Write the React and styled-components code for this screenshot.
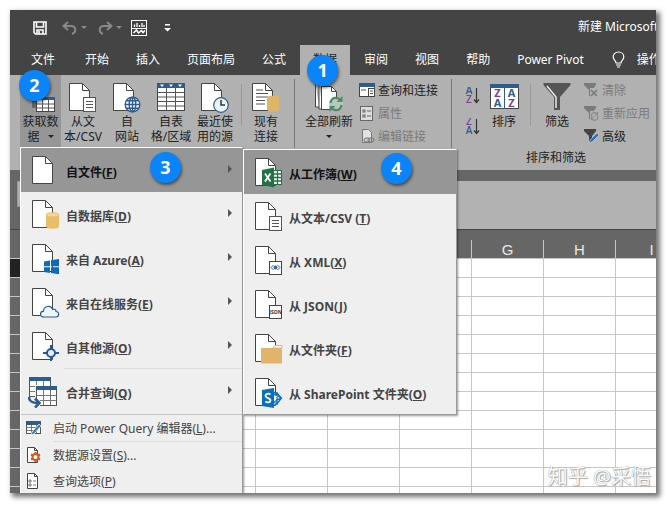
import React from 'react';
import styled, { createGlobalStyle } from 'styled-components';

const GlobalStyle = createGlobalStyle`
	* {
		box-sizing: border-box;
	}
	body {
		margin: 0;
		background: #fff;
		font-family: 'Noto Sans', 'Noto Sans CJK SC', sans-serif;
		font-size: 12px;
		line-height: 15px;
	}
	button {
		margin: 0;
		padding: 0;
		border: 0;
		background: none;
		color: inherit;
		font: inherit;
		cursor: pointer;
	}
	svg {
		display: block;
		flex: none;
	}
`;

const Page = styled.div`
	height: 100vh;
	padding: 10px 12px 12px 10px;
`;

const Window = styled.div`
	height: 100%;
	box-shadow: 3px 3px 5px 1px rgba(0, 0, 0, 0.55);
`;

const Clip = styled.div`
	position: relative;
	display: flex;
	flex-direction: column;
	height: 100%;
	overflow: hidden;
	background: #666;
`;

const TitleBar = styled.header`
	display: flex;
	align-items: center;
	flex: none;
	height: 35px;
	padding-left: 22px;
	background: #444;
	color: #fff;
`;

const QuickButton = styled.button`
	display: flex;
	align-items: center;
	flex: none;
	gap: 3px;
	height: 24px;
	margin-left: ${(props) => props.$gap || 0}px;
	color: ${(props) => (props.$dim ? '#888' : '#fff')};
`;

const Title = styled.h1`
	flex: none;
	margin: 0 0 0 auto;
	width: 78px;
	padding-bottom: 2px;
	font-size: 12px;
	font-weight: 400;
	white-space: nowrap;
`;

const Tabs = styled.nav`
	display: flex;
	flex: none;
	gap: 1px;
	height: 30px;
	padding-left: 5px;
	background: #444;
	color: #fff;
`;

const Tab = styled.button`
	position: relative;
	flex: none;
	padding: 0 ${(props) => (props.$wide ? 16 : 13)}px 2px;
	background: ${(props) => (props.$active ? '#b1b1b1' : 'transparent')};
	color: ${(props) => (props.$active ? '#222' : '#fff')};
	white-space: nowrap;
`;

const TellMe = styled.button`
	display: flex;
	align-items: center;
	flex: none;
	gap: 12px;
	padding: 0 0 2px 14px;
	white-space: nowrap;
`;

const Badge = styled.span`
	position: absolute;
	z-index: 5;
	top: ${(props) => props.$top}px;
	left: ${(props) => props.$left}px;
	width: 31px;
	height: 31px;
	border-radius: 50%;
	background: #0a84f8;
	box-shadow: 1px 2px 3px rgba(0, 0, 0, 0.5);
	color: #fff;
	font: bold 18px/31px 'Open Sans', sans-serif;
	text-align: center;
`;

const Ribbon = styled.section`
	position: relative;
	display: flex;
	flex: none;
	height: 95px;
	padding-left: 10px;
	background: #b1b1b1;
	color: #222;
`;

const Group = styled.div`
	display: flex;
	flex: none;
	height: 73px;
	padding: 0 ${(props) => props.$pad || 0}px;
`;

const Divider = styled.div`
	flex: none;
	width: 1px;
	height: ${(props) => (props.$short ? 42 : 69)}px;
	margin: ${(props) => (props.$short ? '9px 4px 0' : '4px 0 0')};
	background: ${(props) => (props.$short ? '#999' : '#777')};
`;

const BigButton = styled.button`
	position: relative;
	display: flex;
	flex-direction: column;
	align-items: center;
	flex: none;
	width: ${(props) => props.$width || 44}px;
	height: 73px;
	padding-top: 8px;
	background: ${(props) => (props.$open ? '#969696' : 'transparent')};
	white-space: pre;
	svg + span {
		margin-top: 1px;
	}
`;

const CaretRow = styled.span`
	display: flex;
	align-items: center;
	gap: 5px;
	height: 15px;
`;

const SmallList = styled.div`
	display: flex;
	flex-direction: column;
	gap: 1px;
	padding: 4px 0 0 4px;
`;

const SmallButton = styled.button`
	display: flex;
	align-items: center;
	gap: 3px;
	height: 22px;
	white-space: nowrap;
	&:disabled {
		color: #7a7a7a;
	}
`;

const SortColumn = styled.div`
	display: flex;
	flex-direction: column;
	gap: 14px;
	padding: 12px 2px 0 0;
`;

const LabelledGroup = styled.div`
	flex: none;
	width: 182px;
`;

const GroupLabel = styled.div`
	padding-top: 2px;
	text-align: center;
`;

const FormulaBar = styled.div`
	display: flex;
	flex: none;
	height: 60px;
	padding: 11px 0 0 7px;
	border-bottom: 1px solid #444;
`;

const NameBox = styled.input`
	width: 90px;
	height: 26px;
	padding: 0;
	border: 1px solid #999;
	background: #b1b1b1;
`;

const FormulaInput = styled.input`
	flex: 1;
	min-width: 0;
	margin-left: 60px;
	padding: 0;
	border: 0;
	background: #b2b2b2;
`;

const SheetArea = styled.div`
	flex: 1;
	min-height: 0;
	padding-top: 10px;
	overflow: hidden;
`;

const Sheet = styled.table`
	width: 1902px;
	table-layout: fixed;
	border-collapse: separate;
	border-spacing: 0;
	background: #fff;
	th,
	td {
		height: 19px;
		padding: 0;
		border-right: 1px solid #c6c6c6;
		border-bottom: 1px solid #c6c6c6;
	}
	th {
		background: #666;
		color: #e8e8e8;
		font: 400 15px/17px 'Liberation Sans', sans-serif;
	}
	tbody th {
		font-size: 12px;
	}
	tbody tr:first-child th {
		background: #222;
	}
`;

const Watermark = styled.div`
	position: absolute;
	right: 5px;
	bottom: 4px;
	color: #fff;
	font-size: 20px;
	line-height: 24px;
	text-shadow: 0 0 1px #777, 1px 1px 1px #aaa;
`;

const Menu = styled.div`
	position: absolute;
	z-index: 3;
	top: 72px;
	left: 10px;
	width: 223px;
	border: 1px solid #fff;
	border-right-color: #999;
	background: #efefef;
	box-shadow: 1px 1px 2px rgba(0, 0, 0, 0.4);
	color: #444;
`;

const SubMenu = styled(Menu)`
	top: 1px;
	left: 222px;
	width: 214px;
	border-color: #fff #999 #999 #fff;
`;

const MenuEntry = styled.div`
	position: relative;
`;

const MenuItem = styled.button`
	display: flex;
	align-items: center;
	width: 100%;
	height: 44px;
	padding: 2px 9px 0 ${(props) => (props.$outset ? 7 : 11)}px;
	background: ${(props) => (props.$active ? '#969696' : 'transparent')};
	color: ${(props) => (props.$active ? '#111' : '#444')};
	font-weight: 700;
	text-align: left;
	white-space: nowrap;
	&:hover {
		background: ${(props) => (props.$active ? '#969696' : '#ddd')};
	}
`;

const MenuText = styled.span`
	flex: 1;
	padding: 3px 0 0 ${(props) => (props.$outset ? 8 : 6)}px;
`;

const CommandItem = styled.button`
	display: flex;
	align-items: center;
	gap: 12px;
	width: 100%;
	height: 26px;
	padding-left: 5px;
	color: #444;
	white-space: nowrap;
`;

const MenuLine = styled.div`
	height: 1px;
	margin: ${(props) => (props.$indent ? 0 : 1)}px 0 0 ${(props) => props.$indent || 0}px;
	background: ${(props) => (props.$indent ? '#dcdcdc' : '#c4c4c4')};
`;

const Caret = () => (
	<svg width="6" height="3" viewBox="0 0 6 3">
		<path d="M0 0h6L3 3z" fill="currentColor" />
	</svg>
);

const SaveIcon = () => (
	<svg width="16" height="16" viewBox="0 0 16 16" fill="none" stroke="currentColor" strokeWidth="1.6">
		<path d="M2 2h12v12H3.5L2 12.500z" />
		<path d="M4.500 2v5h7V2M5 14v-4h6v4" />
		<path d="M7 11v3" />
	</svg>
);

const UndoIcon = ({ flip }) => (
	<svg width="16" height="14" viewBox="0 0 16 14" fill="none" stroke="currentColor" strokeWidth="2">
		<g transform={flip ? 'translate(16 0) scale(-1 1)' : undefined}>
			<path d="M6 1L1.500 5 6 9M2 5h7c5 0 6 6 1 8" />
		</g>
	</svg>
);

const ChartIcon = () => (
	<svg width="16" height="16" viewBox="0 0 16 16" fill="none" stroke="currentColor">
		<rect x=".5" y=".5" width="15" height="15" />
		<path d="M.5 8.500h15" />
		<path d="M3.500 7V4.500M6 7V3M8.500 7V5M11 7V3M13 7V5" strokeWidth="1.300" />
		<path d="M2.500 13l3-3 2 3 3-2.500 1.500 2 2-2" strokeWidth="1.500" />
	</svg>
);

const MoreIcon = () => (
	<svg width="7" height="8" viewBox="0 0 7 8" fill="currentColor">
		<path d="M1 0h5v1.500H1zM0 4h7L3.500 7.500z" />
	</svg>
);

const BulbIcon = () => (
	<svg width="13" height="17" viewBox="0 0 13 17" fill="none" stroke="#fff" strokeWidth="1.200">
		<path d="M4 12C4 9.500 1.200 9 1.200 5.800 1.200 3 3.500 1 6.500 1s5.300 2 5.300 4.800C11.800 9 9 9.500 9 12zM4 14h5M5 16h3" />
	</svg>
);

// Sheet of paper with a folded corner, with an optional overlay in the lower right.
const DocIcon = ({ children }) => (
	<svg width="28" height="30" viewBox="0 0 28 30">
		<path d="M.5 .5h13l7 7v20H.5z" fill="#fff" stroke="#444" />
		<path d="M13.500 .5v7h7" fill="none" stroke="#444" />
		{children}
	</svg>
);

const NotePart = () => (
	<g stroke="#555" fill="#fff">
		<rect x="14.500" y="14.500" width="12" height="14" />
		<path d="M17 18.500h7M17 21.500h7M17 24.500h7" />
	</g>
);

const GlobePart = () => (
	<g fill="#fff" stroke="#2f5c8f" strokeWidth="1.400">
		<circle cx="19.500" cy="21.500" r="7.300" />
		<ellipse cx="19.500" cy="21.500" rx="3.300" ry="7.300" />
		<path d="M19.500 14v15M12 21.500h15M13.500 17.800h12M13.500 25.200h12" />
	</g>
);

const ClockPart = () => (
	<g fill="#e9f3fc" stroke="#2f5c8f" strokeWidth="1.200">
		<circle cx="20" cy="22" r="7.300" />
		<path d="M20 17v5h4" fill="none" stroke="#333" strokeWidth="1.500" />
	</g>
);

const DatabasePart = () => (
	<g>
		<path d="M14 14.500c0-3 13-3 13 0v12c0 3-13 3-13 0z" fill="#e9be6b" />
		<ellipse cx="20.500" cy="14.800" rx="5.500" ry="1.500" fill="#f5d99c" />
	</g>
);

const WindowsPart = () => (
	<g fill="#0a6cbf">
		<path d="M12 17.500l6-1v5.800h-6zM19 16.300l8-1.300v7.300h-8zM12 23.300h6V29l-6-1zM19 23.300h8v7l-8-1.200z" />
	</g>
);

const CloudPart = () => (
	<path
		d="M12 29c-4.500 0-4.500-5.500-.5-5.800 0-5.500 8-6.500 9.200-1.700 2-.8 3.500.3 3.300 2 3.500.2 3.500 5.500 0 5.500z"
		fill="#eef6fd"
		stroke="#2f5c8f"
		strokeWidth="1.200"
	/>
);

const TargetPart = () => (
	<g fill="none" stroke="#2b579a" strokeWidth="2">
		<path d="M19 13v4M19 25v4M11 21h4M23 21h4" />
		<circle cx="19" cy="21" r="4" fill="#e5effa" />
	</g>
);

const ExcelPart = () => (
	<g>
		<rect x="17.500" y="12.500" width="9" height="14" fill="#fff" stroke="#217346" />
		<path d="M18 16h8M18 19.500h8M18 23h8M22.500 13v13" stroke="#217346" strokeWidth="1.300" />
		<path d="M7 12l12-2.500v20L7 27z" fill="#217346" />
		<path d="M10 15.500l5.500 8M15.500 15.500l-5.500 8" stroke="#fff" strokeWidth="1.800" />
	</g>
);

const XmlPart = () => (
	<g fill="none" stroke="#2b579a">
		<rect x="14.500" y="15.500" width="12" height="13" fill="#fff" stroke="#444" />
		<path d="M18.500 19L16 21.500l2.500 2.500M22.500 19l2.500 2.500-2.500 2.500" />
		<circle cx="20.500" cy="21.500" r="1.500" fill="#2b579a" />
	</g>
);

const JsonPart = () => (
	<g>
		<rect x="14.500" y="15.500" width="12" height="13" fill="#fff" stroke="#444" />
		<text x="20.500" y="24" fontSize="5" fontWeight="700" textAnchor="middle" fill="#333">
			JSON
		</text>
	</g>
);

const FolderPart = () => (
	<g>
		<path d="M18 14l2-2.500h7V14z" fill="#fff" stroke="#e2b36a" />
		<path d="M6 14h21v15.500H6z" fill="#e2b36a" />
	</g>
);

const SharePointPart = () => (
	<g>
		<path d="M17 14l5 1 4.500 5-4.500 6-5 2M19 17l3-2v11l-3-2 7-4-7-4" fill="#fff" stroke="#0a6fc2" strokeWidth="1.300" />
		<path d="M7 12l12-2v20L7 28z" fill="#0a6fc2" />
		<path
			d="M15.500 16.500c-2-1.500-5-.8-5 1.300 0 2.700 5 1.800 5 4.500 0 2.200-3 2.700-5.200 1.300"
			fill="none"
			stroke="#fff"
			strokeWidth="1.800"
		/>
	</g>
);

const TableIcon = () => (
	<svg width="28" height="30" viewBox="0 0 28 30">
		<rect x=".5" y=".5" width="27" height="27" fill="#fff" stroke="#444" />
		<path d="M0 0h28v5H0z" fill="#2f5c8f" />
		<path d="M3 1.500h4L5 4zM12 1.500h4L14 4zM21 1.500h4L23 4z" fill="#fff" />
		<path d="M1 9.500h26M1 14h26M1 18.500h26M1 23h26M9.500 5v22M18.500 5v22" stroke="#555" />
	</svg>
);

const GetDataIcon = () => (
	<svg width="28" height="30" viewBox="0 0 28 30">
		<path d="M5 15h4v10H5z" fill="#666" />
		<rect x="9.500" y="14.500" width="18" height="14" fill="#fff" stroke="#444" />
		<path d="M9 14h19v3H9z" fill="#2f5c8f" />
		<path d="M10 21h17M10 25h17M15.500 17v11M21.500 17v11" stroke="#555" />
	</svg>
);

const ConnectionIcon = () => (
	<DocIcon>
		<path d="M4 7h7M4 10.500h12M4 14h12M4 17.500h9M4 21h9" stroke="#555" />
		<path d="M15 14.500c0-2.500 12-2.500 12 0v12c0 3-12 3-12 0z" fill="#dcb567" />
	</DocIcon>
);

const RefreshIcon = () => (
	<svg width="30" height="30" viewBox="0 0 30 30">
		<path d="M1.500 0v24H5M5 1v25h4" fill="#fff" stroke="#444" />
		<path d="M7.500 3.500h10l5 5v18h-15z" fill="#fff" stroke="#444" />
		<path d="M17.500 3.500v5h5" fill="none" stroke="#444" />
		<circle cx="22" cy="21" r="7" fill="#b9c9bd" />
		<path d="M16.500 20c1-6 7-6.500 10-3M27.500 22c-1 6-7 6.500-10 3" fill="none" stroke="#4d8b69" strokeWidth="2.200" />
		<path d="M28.500 13v6h-6zM15.500 29v-6h6z" fill="#4d8b69" />
	</svg>
);

const MergeIcon = () => (
	<svg width="30" height="31" viewBox="0 0 30 31">
		<rect x="1.500" y=".5" width="21" height="19" fill="#fff" stroke="#555" />
		<path d="M1 0h22v4H1z" fill="#2f5c8f" />
		<path d="M2 9.500h20M2 14.500h20M8.500 4v15M15.500 4v15" stroke="#777" />
		<path d="M7 8h2v12H7z" fill="#efefef" />
		<rect x="8.500" y="9.500" width="20" height="19" fill="#fff" stroke="#555" />
		<path d="M8 9h21v4H8z" fill="#2f5c8f" />
		<path d="M9 18.500h19M9 23.500h19M15.500 13v15M22.500 13v15" stroke="#777" />
		<path d="M0 21c0 4 3 5 12 5" stroke="#efefef" strokeWidth="7" fill="none" />
		<path d="M1 20c0 4 2 6 10 6M7 21.500l4.500 4.500L7 30.500" stroke="#2f5c8f" strokeWidth="2.600" fill="none" />
	</svg>
);

const QueriesIcon = () => (
	<svg width="16" height="14" viewBox="0 0 16 14">
		<rect x=".5" y=".5" width="15" height="13" fill="#fff" stroke="#444" />
		<path d="M0 0h16v4H0z" fill="#2f5c8f" />
		<rect x="9.500" y="5.500" width="6" height="8" fill="#fff" stroke="#444" />
		<path d="M2 7h5M11 8h3M11 10.500h3" stroke="#555" />
	</svg>
);

const PropertiesIcon = () => (
	<svg width="16" height="15" viewBox="0 0 16 15" fill="none" stroke="#666">
		<rect x="1.500" y=".5" width="12" height="14" fill="#ddd" />
		<rect x="4" y="4" width="2" height="2" />
		<rect x="4" y="9" width="2" height="2" />
		<path d="M8 5h4M8 10h4" />
	</svg>
);

const LinksIcon = () => (
	<svg width="16" height="15" viewBox="0 0 16 15" fill="none" stroke="#777">
		<path d="M3.500 .5h6l3 3v10h-9z" fill="#e2e2e2" />
		<rect x="5" y="9" width="6" height="4" rx="2" fill="#ccc" />
		<rect x="9" y="9" width="6" height="4" rx="2" />
	</svg>
);

const SortLetters = ({ first, second }) => (
	<g fontFamily="'Open Sans', sans-serif" fontWeight="600" textAnchor="middle">
		<text x="4" y="7" fill={first === 'A' ? '#2f5c8f' : '#7b4196'}>
			{first}
		</text>
		<text x="4" y="16" fill={second === 'A' ? '#2f5c8f' : '#7b4196'}>
			{second}
		</text>
	</g>
);

const SortIcon = ({ first, second }) => (
	<svg width="15" height="17" viewBox="0 0 15 17" fontSize="10">
		<SortLetters first={first} second={second} />
		<path d="M11.500 1v14M9 12.500l2.500 3 2.500-3" fill="none" stroke="#333" strokeWidth="1.200" />
	</svg>
);

const SortDialogIcon = () => (
	<svg width="29" height="30" viewBox="0 0 29 30">
		<rect x=".5" y="1.500" width="28" height="24" fill="#fff" stroke="#444" />
		<path d="M0 1h29v4H0zM14 5h1v21h-1z" fill="#2f5c8f" />
		<g fontFamily="'Open Sans', sans-serif" fontSize="11" fontWeight="700" textAnchor="middle">
			<text x="7.500" y="14" fill="#7b4196">Z</text>
			<text x="7.500" y="24" fill="#2f5c8f">A</text>
			<text x="21.500" y="14" fill="#2f5c8f">A</text>
			<text x="21.500" y="24" fill="#7b4196">Z</text>
		</g>
	</svg>
);

const FilterIcon = () => (
	<svg width="28" height="30" viewBox="0 0 28 30">
		<path d="M.5 0h27v2L17 14v13h-6V14L.5 2z" fill="#555" />
		<path d="M4 3l9 11v11" fill="none" stroke="#e8e8e8" strokeWidth="1.500" />
	</svg>
);

const SmallFilterIcon = ({ kind }) => (
	<svg width="16" height="15" viewBox="0 0 16 15" fill="none">
		<path d="M1 0h12v2L9 7v6H6V7L1 2z" fill={kind === 'advanced' ? '#444' : '#7a7a7a'} />
		{kind !== 'advanced' && <path d="M7 5h9v10H7z" fill="#b1b1b1" />}
		{kind === 'clear' && <path d="M8 7l6 6M14 7l-6 6" stroke="#777" strokeWidth="1.500" />}
		{kind === 'reapply' && <path d="M8.500 10a3 3 0 0 1 5.500-2M14.500 10a3 3 0 0 1-5.500 2.500M14.500 6v3h-3M8.500 14v-3h3" stroke="#888" strokeWidth="1.200" />}
		{kind === 'advanced' && <path d="M6 14l1-3 7-7 2 2-7 7z" fill="#2f6fb0" stroke="#d5d5d5" strokeWidth=".6" />}
	</svg>
);

const EditorIcon = () => (
	<svg width="15" height="15" viewBox="0 0 15 15">
		<rect x=".5" y=".5" width="14" height="12" fill="#fff" stroke="#555" />
		<path d="M0 0h15v4H0z" fill="#2f5c8f" />
		<path d="M1 6.500h13M1 9.500h10M5.500 4v8M10.500 4v8" stroke="#777" />
		<path d="M5 14l1-3 7-8 2 2-7 8z" fill="#3c77b5" stroke="#fff" strokeWidth=".7" />
	</svg>
);

const SmallDoc = ({ children }) => (
	<svg width="15" height="16" viewBox="0 0 15 16" fill="none">
		<path d="M1.500 .5h7l3 3v12h-10z" fill="#fff" stroke="#444" />
		<path d="M8.500 .5v3h3" stroke="#444" />
		{children}
	</svg>
);

const SettingsIcon = () => (
	<SmallDoc>
		<path d="M9.500 5v10M5 7.500l9 5M14 7.500l-9 5" stroke="#d3591c" strokeWidth="2.200" />
		<circle cx="9.500" cy="10" r="3" fill="#fff" stroke="#d3591c" strokeWidth="2" />
	</SmallDoc>
);

const OptionsIcon = () => (
	<SmallDoc>
		<path d="M3 7h2v2H3zM3 11h2v2H3zM7 8h3M7 12h3" stroke="#555" strokeWidth=".8" />
	</SmallDoc>
);

const Arrow = () => (
	<svg width="5" height="14" viewBox="0 0 5 14">
		<path d="M0 1l4 4-4 4z" fill="#555" />
	</svg>
);

const sources = [
	{ text: '自数据库', hotkey: 'D', part: <DatabasePart /> },
	{ text: '来自 Azure', hotkey: 'A', part: <WindowsPart /> },
	{ text: '来自在线服务', hotkey: 'E', part: <CloudPart /> },
	{ text: '自其他源', hotkey: 'O', part: <TargetPart /> }
];

const files = [
	{ text: '从工作簿', hotkey: 'W', part: <ExcelPart /> },
	{ text: '从文本/CSV ', hotkey: 'T', part: <NotePart /> },
	{ text: '从 XML', hotkey: 'X', part: <XmlPart /> },
	{ text: '从 JSON', hotkey: 'J', part: <JsonPart /> },
	{ text: '从文件夹', hotkey: 'F', part: <FolderPart /> },
	{ text: '从 SharePoint 文件夹', hotkey: 'O', part: <SharePointPart /> }
];

const Hotkey = ({ text, letter }) => (
	<>
		{text}(<u>{letter}</u>)
	</>
);

const FileMenu = () => (
	<SubMenu role="menu" aria-label="自文件">
		{files.map(({ text, hotkey, part }, i) => (
			<MenuEntry key={text}>
				<MenuItem role="menuitem" $active={i === 0}>
					<DocIcon>{part}</DocIcon>
					<MenuText>
						<Hotkey text={text} letter={hotkey} />
					</MenuText>
				</MenuItem>
				{i === 0 && <Badge $top={3} $left={137}>4</Badge>}
			</MenuEntry>
		))}
	</SubMenu>
);

const DataMenu = () => (
	<Menu role="menu" aria-label="获取数据">
		<MenuEntry>
			<MenuItem role="menuitem" aria-haspopup="true" $active>
				<DocIcon />
				<MenuText>
					<Hotkey text="自文件" letter="F" />
				</MenuText>
				<Arrow />
			</MenuItem>
			<Badge $top={4} $left={129}>3</Badge>
			<FileMenu />
		</MenuEntry>
		{sources.map(({ text, hotkey, part }) => (
			<MenuItem key={text} role="menuitem" aria-haspopup="true">
				<DocIcon>{part}</DocIcon>
				<MenuText>
					<Hotkey text={text} letter={hotkey} />
				</MenuText>
				<Arrow />
			</MenuItem>
		))}
		<MenuLine $indent={43} />
		<MenuItem role="menuitem" aria-haspopup="true" $outset>
			<MergeIcon />
			<MenuText $outset>
				<Hotkey text="合并查询" letter="Q" />
			</MenuText>
			<Arrow />
		</MenuItem>
		<MenuLine />
		<CommandItem role="menuitem">
			<EditorIcon />
			<span>
				<Hotkey text="启动 Power Query 编辑器" letter="L" />...
			</span>
		</CommandItem>
		<MenuLine $indent={32} />
		<CommandItem role="menuitem">
			<SettingsIcon />
			<span>
				<Hotkey text="数据源设置" letter="S" />...
			</span>
		</CommandItem>
		<CommandItem role="menuitem">
			<OptionsIcon />
			<span>
				<Hotkey text="查询选项" letter="P" />
			</span>
		</CommandItem>
	</Menu>
);

const tabs = ['文件', '开始', '插入', '页面布局', '公式', '数据', '审阅', '视图', '帮助', 'Power Pivot'];
const columns = 'ABCDEFGHIJKLMNOPQRSTUVWXYZ'.split('');
const rows = Array.from({ length: 60 }, (_, i) => i + 1);

const App = () => (
	<Page>
		<GlobalStyle />
		<Window>
			<Clip>
				<TitleBar>
					<QuickButton aria-label="保存">
						<SaveIcon />
					</QuickButton>
					<QuickButton $gap={14} $dim aria-label="撤消">
						<UndoIcon />
						<Caret />
					</QuickButton>
					<QuickButton $gap={10} $dim aria-label="恢复">
						<UndoIcon flip />
						<Caret />
					</QuickButton>
					<QuickButton $gap={9} aria-label="图表">
						<ChartIcon />
					</QuickButton>
					<QuickButton $gap={17} aria-label="自定义">
						<MoreIcon />
					</QuickButton>
					<Title>新建 Microsoft Excel 工作表</Title>
				</TitleBar>
				<Tabs>
					{tabs.map((tab, i) => (
						<Tab key={tab} $wide={i === 0} $active={tab === '数据'}>
							{tab}
							{tab === '数据' && <Badge $top={10} $left={7}>1</Badge>}
						</Tab>
					))}
					<TellMe>
						<BulbIcon />
						操作说明搜索
					</TellMe>
				</Tabs>
				<Ribbon>
					<BigButton $width={41} $open aria-haspopup="true">
						<GetDataIcon />
						<span>获取数</span>
						<CaretRow>据 <Caret /></CaretRow>
						<Badge $top={-5} $left={-1}>2</Badge>
					</BigButton>
					<BigButton>
						<DocIcon><NotePart /></DocIcon>
						<span>{'从文\n本/CSV'}</span>
					</BigButton>
					<BigButton>
						<DocIcon><GlobePart /></DocIcon>
						<span>{'自\n网站'}</span>
					</BigButton>
					<BigButton>
						<TableIcon />
						<span>{'自表\n格/区域'}</span>
					</BigButton>
					<BigButton>
						<DocIcon><ClockPart /></DocIcon>
						<span>{'最近使\n用的源'}</span>
					</BigButton>
					<Divider $short />
					<BigButton $width={40}>
						<ConnectionIcon />
						<span>{'现有\n连接'}</span>
					</BigButton>
					<Group $pad={8}>
						<Divider />
					</Group>
					<Group>
						<BigButton $width={52}>
							<RefreshIcon />
							<span>全部刷新</span>
							<CaretRow><Caret /></CaretRow>
						</BigButton>
						<SmallList>
							<SmallButton><QueriesIcon />查询和连接</SmallButton>
							<SmallButton disabled><PropertiesIcon />属性</SmallButton>
							<SmallButton disabled><LinksIcon />编辑链接</SmallButton>
						</SmallList>
					</Group>
					<Group $pad={13}>
						<Divider />
					</Group>
					<LabelledGroup>
						<Group>
							<SortColumn>
								<button aria-label="升序"><SortIcon first="A" second="Z" /></button>
								<button aria-label="降序"><SortIcon first="Z" second="A" /></button>
							</SortColumn>
							<BigButton>
								<SortDialogIcon />
								<span>排序</span>
							</BigButton>
							<Divider $short />
							<BigButton>
								<FilterIcon />
								<span>筛选</span>
							</BigButton>
							<SmallList>
								<SmallButton disabled><SmallFilterIcon kind="clear" />清除</SmallButton>
								<SmallButton disabled><SmallFilterIcon kind="reapply" />重新应用</SmallButton>
								<SmallButton><SmallFilterIcon kind="advanced" />高级</SmallButton>
							</SmallList>
						</Group>
						<GroupLabel>排序和筛选</GroupLabel>
					</LabelledGroup>
					<DataMenu />
				</Ribbon>
				<FormulaBar>
					<NameBox aria-label="名称框" />
					<FormulaInput aria-label="编辑栏" />
				</FormulaBar>
				<SheetArea>
					<Sheet>
						<colgroup>
							<col style={{ width: 30 }} />
							{columns.map((column) => (
								<col key={column} style={{ width: 72 }} />
							))}
						</colgroup>
						<thead>
							<tr>
								<th aria-label="全选" />
								{columns.map((column) => (
									<th key={column} scope="col">{column}</th>
								))}
							</tr>
						</thead>
						<tbody>
							{rows.map((row) => (
								<tr key={row}>
									<th scope="row" aria-label={row} />
									{columns.map((column) => (
										<td key={column} />
									))}
								</tr>
							))}
						</tbody>
					</Sheet>
				</SheetArea>
				<Watermark>知乎 @采悟</Watermark>
			</Clip>
		</Window>
	</Page>
);

export default App;
